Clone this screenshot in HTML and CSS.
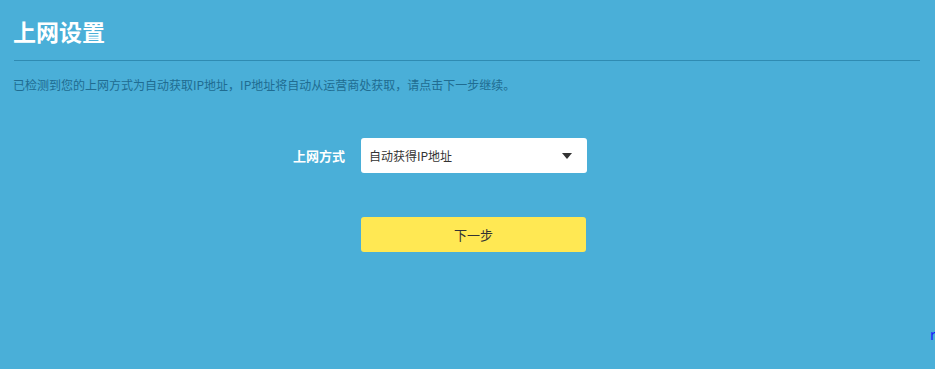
FILE: index.html
```html
<!DOCTYPE html>
<html lang="zh-CN">
<head>
    <meta charset="UTF-8">
    <meta name="viewport" content="width=device-width, initial-scale=1.0">
    <title>上网设置</title>
    <link rel="stylesheet" href="styles.css">
</head>
<body>
    <div class="container">
        <h1>上网设置</h1>
        <hr>
        <p class="tip">已检测到您的上网方式为自动获取IP地址，IP地址将自动从运营商处获取，请点击下一步继续。</p>

        <div class="row">
            <label class="label">上网方式</label>
            <div class="select">
                <span>自动获得IP地址</span>
                <span class="arrow"></span>
            </div>
        </div>

        <div class="row">
            <span class="label"></span>
            <button class="next">下一步</button>
        </div>
    </div>
    <a class="corner" href="#">r</a>
</body>
</html>
```

FILE: styles.css
```css
body {
    margin: 0;
    padding: 0;
    background: #4aafd8;
    font-family: "Noto Sans CJK SC", "Liberation Sans", sans-serif;
    height: 100vh;
    overflow: hidden;
    position: relative;
}
.container {
    padding: 0 15px 0 14px;
}
h1 {
    margin: 0 0 0 -1px;
    padding-top: 15px;
    height: 32px;
    line-height: 32px;
    font-size: 23px;
    font-weight: bold;
    color: #fff;
}
hr {
    border: none;
    border-top: 1px solid #2f8bb2;
    margin: 13px 0 0 0;
}
.tip {
    margin: 14px 0 0 -1px;
    font-size: 12px;
    line-height: 20px;
    color: #206c91;
}
.row {
    display: flex;
    align-items: center;
    margin-top: 43px;
}
.row + .row {
    margin-top: 44px;
}
.label {
    width: 347px;
    padding-right: 16px;
    box-sizing: border-box;
    text-align: right;
    font-size: 13px;
    font-weight: bold;
    color: #fff;
}
.select {
    width: 226px;
    height: 35px;
    box-sizing: border-box;
    background: #fff;
    border-radius: 3px;
    display: flex;
    align-items: center;
    justify-content: space-between;
    padding: 0 15px 0 8px;
    font-size: 12px;
    color: #333;
}
.arrow {
    width: 0;
    height: 0;
    border-left: 5px solid transparent;
    border-right: 5px solid transparent;
    border-top: 6px solid #333;
}
.next {
    width: 225px;
    height: 35px;
    border: none;
    border-radius: 3px;
    background: #ffe853;
    color: #333;
    font-size: 13px;
    font-family: inherit;
    cursor: pointer;
}
.corner {
    position: absolute;
    left: 930px;
    top: 324px;
    font-size: 14px;
    color: #1a1aff;
    text-decoration: none;
}
```
